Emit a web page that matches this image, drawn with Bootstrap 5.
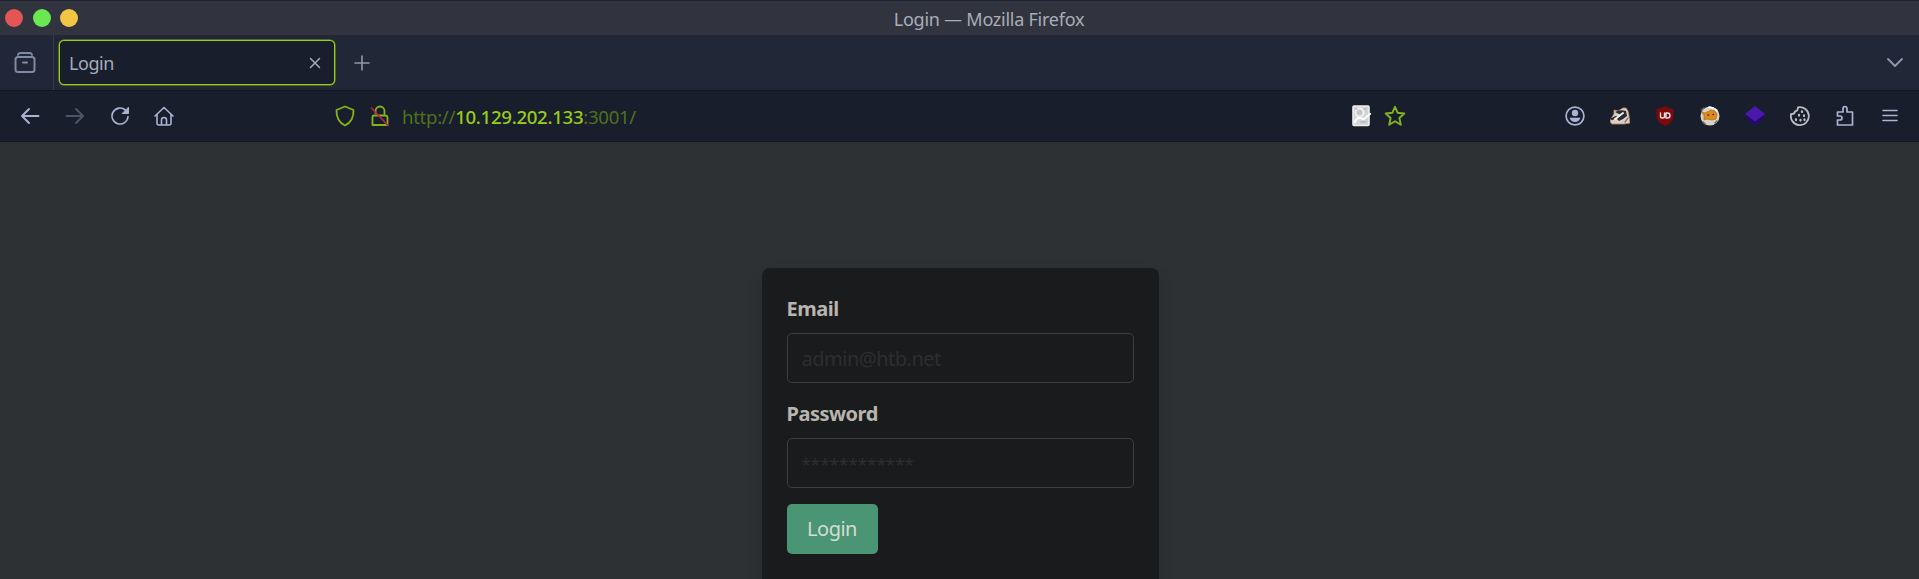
<!DOCTYPE html>
<html lang="en">
<head>
<meta charset="utf-8">
<title>Login</title>
<meta name="viewport" content="width=device-width, initial-scale=1">
<link href="https://cdn.jsdelivr.net/npm/bootstrap@5.3.0/dist/css/bootstrap.min.css" rel="stylesheet">
<style>
body{font-family:"Noto Sans",sans-serif;background:#2d3133;height:579px;overflow:hidden;color:#a9adb6}
svg{display:block;flex:none;fill:none;stroke:currentColor;stroke-width:1.6;stroke-linecap:round;stroke-linejoin:round}
.titlebar{height:35px;background:#31343f;border-top:1px solid #1d2233;font-size:18px;padding-left:5px}
.titlebar .side{width:400px;gap:9.5px}
.dot{width:18px;height:18px;border-radius:50%}
.dot-r{background:#e25656}.dot-g{background:#6ae84f}.dot-y{background:#f3c544}
.win-title{letter-spacing:-.25px;line-height:34px;padding:1px 0 0 54px}
.tabstrip{height:56px;background:#212736;border-bottom:1px solid #11151f}
.tabview{width:54px;border-right:1px solid #343a4a;color:#7f8ba3}
.tab-on{width:276px;height:45px;margin:5px 0 0 5px;border:1px solid #9acd18;box-shadow:0 0 0 .5px #7fa91c;border-radius:5px;background:#181e2b;font-size:18px;letter-spacing:-.45px;padding:1px 13px 0 9px;color:#a4acbb}
.toolbar-nav{height:51px;background:#181e2b;color:#aab4d2;border-bottom:1px solid #121722}
.url{font-size:18.67px;letter-spacing:-.32px;color:#4f7020;white-space:nowrap;padding-top:1px}
.url b{font-weight:500;color:#9acd18}
.lime{color:#84b41c}
.login-box{width:397px;height:330px;margin-top:126px;margin-left:1px;background:#1a1b1c;border-radius:8px;padding:26px 25px;box-shadow:0 8px 16px rgba(10,10,10,.12)}
.login-box label{font-size:20px;font-weight:700;letter-spacing:-.5px;line-height:30px;height:30px;margin-bottom:9px;color:#b8b5af;display:block}
.login-box .form-control{height:50px;background:#1a1b1c;border:1px solid #3c3f41;border-radius:5px;font-size:20px;padding:0 14px;color:#ccc;margin-bottom:16px;letter-spacing:-.5px}
.login-box .form-control[type=password]{font-size:17px;letter-spacing:0}
.login-box .form-control::placeholder{color:#2d2e2f;opacity:1}
.btn-enter{width:91px;height:50px;background:#4a9573;color:#d5dcd6;border:0;border-radius:5px;font-size:20px;letter-spacing:-.5px;padding:0}
</style>
</head>
<body>
<header class="titlebar d-flex align-items-center justify-content-between">
  <div class="side d-flex"><span class="dot dot-r"></span><span class="dot dot-g"></span><span class="dot dot-y"></span></div>
  <div class="win-title">Login — Mozilla Firefox</div>
  <div class="side"></div>
</header>
<div class="tabstrip d-flex">
  <div class="tabview d-flex align-items-center justify-content-center"><svg width="22" height="22" viewBox="0 0 22 22" style="margin-left:-3px"><path d="M4 2.800Q4.300 1 6 1H16Q17.700 1 18 2.800" stroke-width="2"/><rect x="1.500" y="5" width="19" height="15" rx="2.500" stroke-width="2"/><path d="M9 10.500H13" stroke-width="2"/></svg></div>
  <div class="tab-on d-flex align-items-center justify-content-between"><span>Login</span><svg width="12" height="12" viewBox="0 0 12 12"><path d="M1.500 1.500 10.500 10.500M10.500 1.500 1.500 10.500" stroke-width="1.500"/></svg></div>
  <svg class="align-self-center" width="16" height="16" viewBox="0 0 16 16" style="margin:1px 0 0 19px;color:#8f98aa"><path d="M8 1V15M1 8H15" stroke-width="1.600"/></svg>
  <svg class="align-self-center ms-auto" width="18" height="12" viewBox="0 0 18 12" style="margin-right:15px;color:#8f98aa"><path d="M2 2 9 9 16 2" stroke-width="1.800"/></svg>
</div>
<nav class="toolbar-nav d-flex align-items-center">
  <svg width="20" height="20" viewBox="0 0 20 20" style="margin-left:20px"><path d="M18.500 10H2M9 3 2 10 9 17" stroke-width="1.900"/></svg>
  <svg width="20" height="20" viewBox="0 0 20 20" style="margin-left:25px;color:#4c566a"><path d="M1.500 10H18M11 3 18 10 11 17" stroke-width="1.900"/></svg>
  <svg width="20" height="20" viewBox="0 0 20 20" style="margin-left:25px"><path d="M18 10.500A8 8 0 1 1 15.500 4.200"/><path d="M18.500 1.500V7.500H12.500Z" fill="currentColor" stroke-width="1"/></svg>
  <svg width="20" height="20" viewBox="0 0 20 20" style="margin-left:24px"><path d="M1 10 10 1.500 19 10M3 8.500V17Q3 19 5 19H15Q17 19 17 17V8.500M7.500 19V14Q7.500 11.500 10 11.500T12.500 14V19"/></svg>
  <svg class="lime" width="20" height="22" viewBox="0 0 20 22" style="margin-left:161px"><path d="M10 1.500 18.500 5Q19 16 10 20.500 1 16 1.500 5Z" stroke-width="1.800"/></svg>
  <svg class="lime" width="20" height="22" viewBox="0 0 20 22" style="margin-left:15px"><path d="M5.500 8V6A4.500 4.500 0 0 1 14.500 6V10M4 10.500H15Q17.500 10.500 17.500 12.500V20H2.500V12.500Q2.500 10.500 4 10.500" stroke-width="1.800"/><path d="M1.500 3 18 20.500" stroke="#b52545" stroke-width="1.700"/></svg>
  <div class="url" style="margin-left:12px">http://<b>10.129.202.133</b>:3001/</div>
  <svg class="ms-auto" width="19" height="22" viewBox="0 0 19 22"><rect x="1" y="1" width="16" height="19.500" rx="1" fill="#d3d4d8" stroke="#eeeeef"/><circle cx="7.500" cy="7.500" r="4" stroke="#f4f4f5" fill="#c5c6ca" stroke-width="1.800"/><path d="M3 17Q5 12 8 13T12 14L18 9" stroke="#fff" stroke-width="2.200"/><path d="M4 4H5M12 4H14M9 17H14" stroke="#b8babf" stroke-width="1.300"/></svg>
  <svg class="lime" width="22" height="22" viewBox="0 0 22 22" style="margin-left:13px"><path d="M11 1.800 13.700 7.800 20.300 8.500 15.400 13 16.800 19.700 11 16.300 5.200 19.700 6.600 13 1.700 8.500 8.300 7.800Z" stroke-width="1.900"/></svg>
  <div class="d-flex align-items-center" style="margin:0 19px 0 159.500px;gap:25px">
    <svg width="20" height="20" viewBox="0 0 20 20"><circle cx="10" cy="10" r="8.900" stroke-width="1.700"/><circle cx="10" cy="7" r="3.200" fill="currentColor" stroke="none"/><path d="M4.500 11.800H15.500Q14 16 10 16T4.500 11.800Z" fill="currentColor" stroke="none"/></svg>
    <svg width="20" height="18" viewBox="0 0 20 18"><path d="M0 14 2 10 4 7 4 3 8 4 13 1 16 1 18 4 19 9 20 16 14 17 2 17Z" fill="#d8cfc6" stroke="#c08a5c" stroke-width=".8"/><path d="M5 5Q10 2 16 4L17 9 13 12 9 14 7 12 11 8Z" fill="#292c34" stroke="none"/><path d="M2 12 6 10" stroke="#292c34" stroke-width="2.200"/><path d="M5 12 13 6" stroke="#f5f1ed" stroke-width="2"/><path d="M15 15 18 11" stroke="#6a615a" stroke-width="1.200"/></svg>
    <svg width="20" height="20" viewBox="0 0 20 20"><path d="M10 0Q14 3 18.500 3V10Q18 17 10 20 2 17 1.500 10V3Q6 3 10 0Z" fill="#7d090b" stroke="none"/><path d="M5.500 7V10.500Q5.500 12 7.500 12T9.500 10.500V7M11 7V12H12.500Q15 12 15 9.500T12.500 7Z" stroke="#e6dede" stroke-width="1.400"/></svg>
    <svg width="20" height="20" viewBox="0 0 20 20"><circle cx="10" cy="10" r="9.500" fill="#d8d3c8" stroke="none"/><path d="M2 6 5 7 9 5 11 4 15 5 17 8 16 13 12 14 7 13 4 14 4 10Z" fill="#dd8b1c" stroke="#ad6817" stroke-width=".7"/><path d="M8 9H8.500M13 8.500H13.500" stroke="#4b321b"/><path d="M9 1 13 2M15 3 17 5" stroke="#fff"/><path d="M1.500 4 4 2M3 16 5 18M15 17 17 15" stroke="#7a6a50"/></svg>
    <svg width="20" height="20" viewBox="0 0 20 20"><path d="M0 11 10 4 20 11 10 20Z" fill="#25096f" stroke="none"/><path d="M0 8 10 0 20 8 10 15.500Z" fill="#4b19aa" stroke="none"/></svg>
    <svg width="20" height="20" viewBox="0 0 20 20" style="color:#b9bcc2"><path d="M8 1.300A9 9 0 1 1 1.100 8Q4.500 8.500 5 5.500 8 5 8 1.300Z" stroke-width="1.800"/><path d="M12 5.500V6M9 9V9.500M14 9.500V10M6 13.500V14M10.500 14V14.500M14.500 13.500V14" stroke-width="2.300"/></svg>
    <svg width="20" height="22" viewBox="0 0 20 22"><path d="M2.500 20V15H5Q7 15 7 13T5 11H2.500V7H8V4Q8 1.500 10 1.500T12 4V7H17.500V20Z" stroke-width="1.700"/></svg>
    <svg width="20" height="20" viewBox="0 0 20 20"><path d="M3 4.500H17M3 9.500H17M3 14.500H17"/></svg>
  </div>
</nav>
<main class="d-flex justify-content-center">
  <form class="login-box">
    <label for="em">Email</label>
    <input id="em" class="form-control" placeholder="admin@htb.net">
    <label for="pw">Password</label>
    <input id="pw" type="password" class="form-control" placeholder="************">
    <button type="button" class="btn btn-enter">Login</button>
  </form>
</main>
<script src="https://cdn.jsdelivr.net/npm/bootstrap@5.3.0/dist/js/bootstrap.bundle.min.js"></script>
</body>
</html>
